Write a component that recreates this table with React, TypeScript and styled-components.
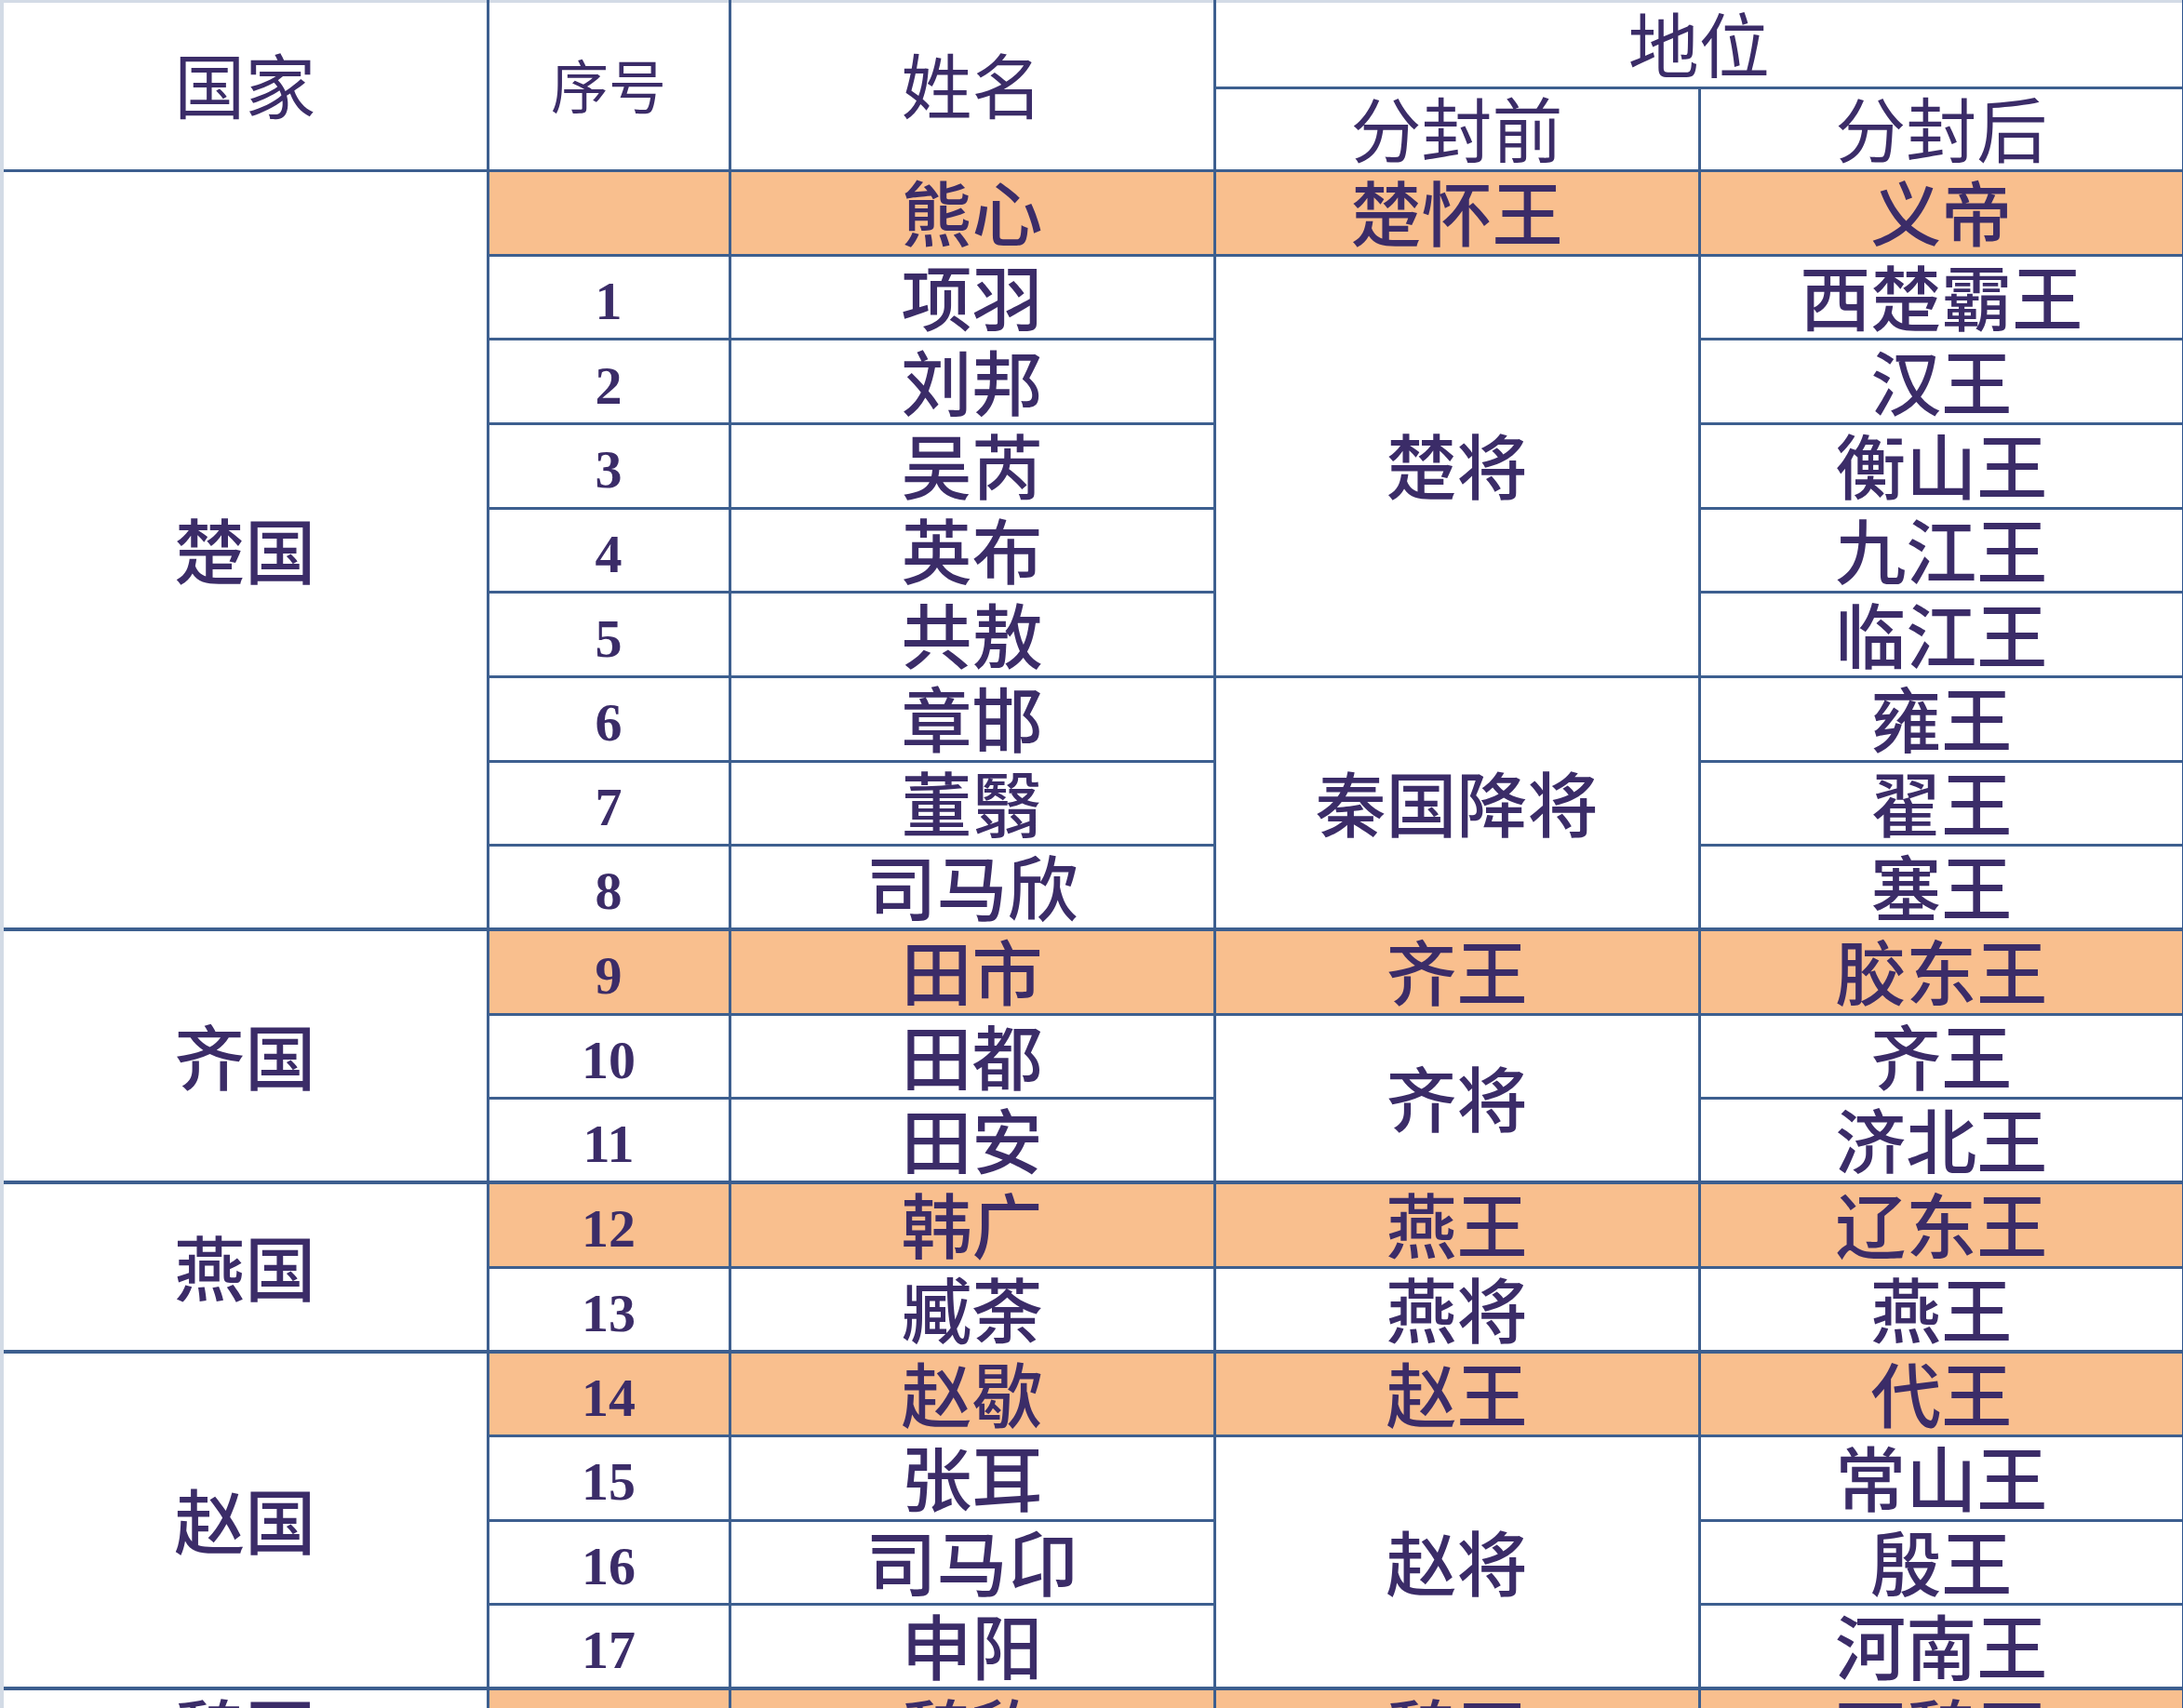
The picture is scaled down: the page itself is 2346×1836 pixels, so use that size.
import React from "react";
import styled, { createGlobalStyle } from "styled-components";

const GlobalStyle = createGlobalStyle`
  html, body {
    margin: 0;
    padding: 0;
    background: #ffffff;
    overflow: hidden;
  }
`;

const LINE = "#3d5f8f";
const EDGE = "#d3dbe6";

const Sheet = styled.table`
  width: 2346px;
  table-layout: fixed;
  border-collapse: collapse;
  font-family: "Liberation Serif", "Noto Sans CJK SC", serif;
  color: #3b2c68;
`;

const HeadRow = styled.tr<{ $h: number }>`
  height: ${(p) => p.$h}px;
`;

const HeadCell = styled.th<{ $small?: boolean; $top?: boolean; $first?: boolean; $last?: boolean }>`
  padding: 7px 0 0;
  border: 3px solid ${LINE};
  ${(p) => p.$top && `border-top: 3px solid ${EDGE};`}
  ${(p) => p.$first && `border-left: 4px solid ${EDGE};`}
  ${(p) => p.$last && `border-right: 6px solid #2f5690;`}
  font-size: ${(p) => (p.$small ? 62 : 76)}px;
  font-weight: 400;
  line-height: 1;
  text-align: center;
  vertical-align: middle;
`;

const Row = styled.tr<{ $group?: boolean }>`
  height: 90.67px;
  ${(p) => p.$group && `border-top: 4px solid ${LINE};`}
`;

const Cell = styled.td<{ $fill?: boolean; $num?: boolean; $first?: boolean; $last?: boolean; $group?: boolean }>`
  padding: 9px 0 0;
  border: 3px solid ${LINE};
  ${(p) => p.$group && `border-top: 4px solid ${LINE};`}
  ${(p) => p.$first && `border-left: 4px solid ${EDGE};`}
  ${(p) => p.$last && `border-right: 6px solid #2f5690;`}
  background: ${(p) => (p.$fill ? "#f9bf8e" : "#ffffff")};
  font-size: ${(p) => (p.$num ? 58 : 76)}px;
  font-weight: ${(p) => (p.$num ? 700 : 500)};
  line-height: 1;
  text-align: center;
  vertical-align: middle;
  white-space: nowrap;
  overflow: hidden;
`;

type Entry = {
  num: string;
  name: string;
  before?: { text: string; span: number };
  after: string;
  fill?: boolean;
  country?: { text: string; span: number };
};

const entries: Entry[] = [
  { num: "", name: "熊心", before: { text: "楚怀王", span: 1 }, after: "义帝", fill: true, country: { text: "楚国", span: 9 } },
  { num: "1", name: "项羽", before: { text: "楚将", span: 5 }, after: "西楚霸王" },
  { num: "2", name: "刘邦", after: "汉王" },
  { num: "3", name: "吴芮", after: "衡山王" },
  { num: "4", name: "英布", after: "九江王" },
  { num: "5", name: "共敖", after: "临江王" },
  { num: "6", name: "章邯", before: { text: "秦国降将", span: 3 }, after: "雍王" },
  { num: "7", name: "董翳", after: "翟王" },
  { num: "8", name: "司马欣", after: "塞王" },
  { num: "9", name: "田市", before: { text: "齐王", span: 1 }, after: "胶东王", fill: true, country: { text: "齐国", span: 3 } },
  { num: "10", name: "田都", before: { text: "齐将", span: 2 }, after: "齐王" },
  { num: "11", name: "田安", after: "济北王" },
  { num: "12", name: "韩广", before: { text: "燕王", span: 1 }, after: "辽东王", fill: true, country: { text: "燕国", span: 2 } },
  { num: "13", name: "臧荼", before: { text: "燕将", span: 1 }, after: "燕王" },
  { num: "14", name: "赵歇", before: { text: "赵王", span: 1 }, after: "代王", fill: true, country: { text: "赵国", span: 4 } },
  { num: "15", name: "张耳", before: { text: "赵将", span: 3 }, after: "常山王" },
  { num: "16", name: "司马卬", after: "殷王" },
  { num: "17", name: "申阳", after: "河南王" },
  { num: "18", name: "魏豹", before: { text: "魏王", span: 1 }, after: "西魏王", fill: true, country: { text: "魏国", span: 1 } },
];

export default function App() {
  return (
    <>
      <GlobalStyle />
      <Sheet>
        <colgroup>
          <col style={{ width: 522 }} />
          <col style={{ width: 260 }} />
          <col style={{ width: 521 }} />
          <col style={{ width: 521 }} />
          <col style={{ width: 522 }} />
        </colgroup>
        <thead>
          <HeadRow $h={93}>
            <HeadCell rowSpan={2} $top $first>国家</HeadCell>
            <HeadCell rowSpan={2} $top $small>序号</HeadCell>
            <HeadCell rowSpan={2} $top>姓名</HeadCell>
            <HeadCell colSpan={2} $top $last>地位</HeadCell>
          </HeadRow>
          <HeadRow $h={89}>
            <HeadCell>分封前</HeadCell>
            <HeadCell $last>分封后</HeadCell>
          </HeadRow>
        </thead>
        <tbody>
          {entries.map((e, i) => {
            const group = !!e.country && i > 0;
            return (
              <Row key={i} $group={group}>
                {e.country && (
                  <Cell rowSpan={e.country.span} $first $group={group}>
                    {e.country.text}
                  </Cell>
                )}
                <Cell $num $fill={e.fill} $group={group}>{e.num}</Cell>
                <Cell $fill={e.fill} $group={group}>{e.name}</Cell>
                {e.before && (
                  <Cell rowSpan={e.before.span} $fill={e.fill} $group={group}>
                    {e.before.text}
                  </Cell>
                )}
                <Cell $fill={e.fill} $last $group={group}>{e.after}</Cell>
              </Row>
            );
          })}
        </tbody>
      </Sheet>
    </>
  );
}
